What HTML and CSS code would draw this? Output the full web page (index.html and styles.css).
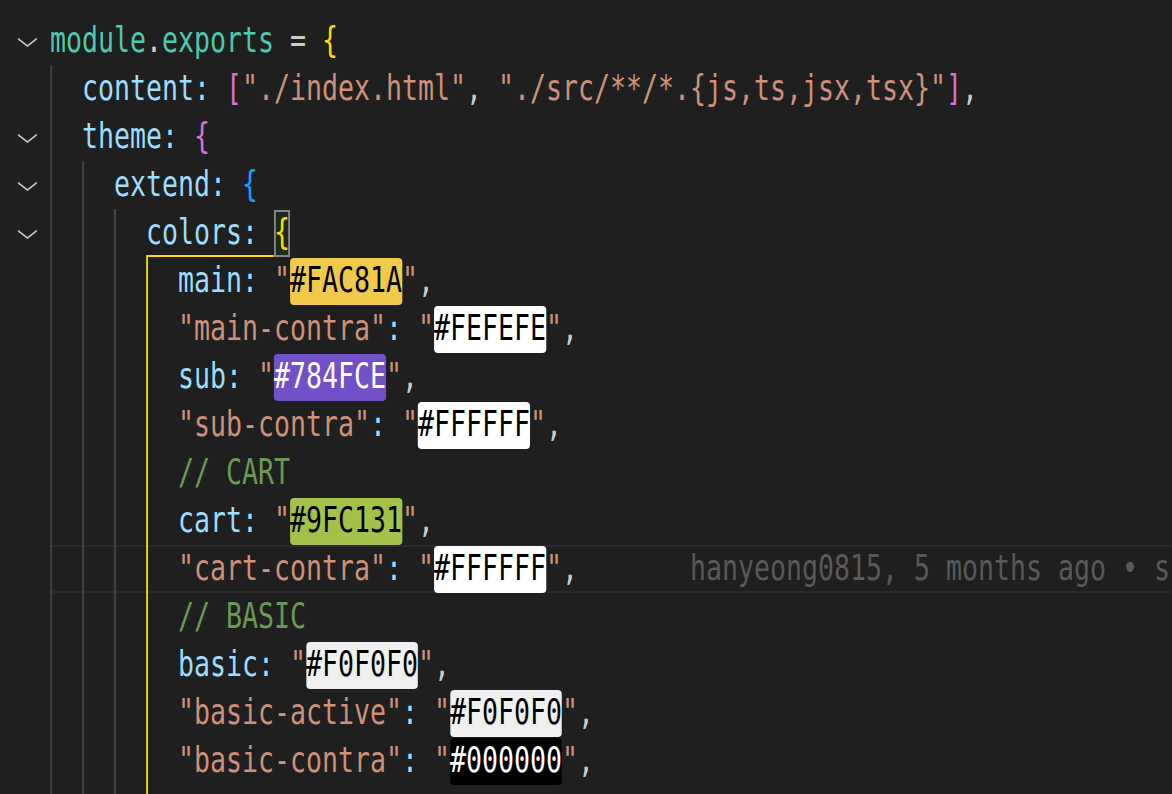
FILE: index.html
```html
<!DOCTYPE html>
<html lang="en">
<head>
<meta charset="utf-8">
<title>tailwind.config.js</title>
<link rel="stylesheet" href="styles.css">
</head>
<body>
<div class="editor">
  <div class="line"><div class="gutter"><svg class="chev" viewBox="0 0 26 9" preserveAspectRatio="none"><polyline points="1,1 13,8 25,1"/></svg></div><div class="code"><span class="var">module</span><span class="op">.</span><span class="var">exports</span><span class="op"> = </span><span class="b1">{</span></div></div>
  <div class="line"><div class="gutter"></div><div class="code"><span class="ind"></span><span class="key">content:</span><span class="op"> </span><span class="b2">[</span><span class="str">"./index.html"</span><span class="op">, </span><span class="str">"./src/**/*.{js,ts,jsx,tsx}"</span><span class="b2">]</span><span class="op">,</span></div></div>
  <div class="line"><div class="gutter"><svg class="chev" viewBox="0 0 26 9" preserveAspectRatio="none"><polyline points="1,1 13,8 25,1"/></svg></div><div class="code"><span class="ind"></span><span class="key">theme:</span><span class="op"> </span><span class="b2">{</span></div></div>
  <div class="line"><div class="gutter"><svg class="chev" viewBox="0 0 26 9" preserveAspectRatio="none"><polyline points="1,1 13,8 25,1"/></svg></div><div class="code"><span class="ind"></span><span class="ind"></span><span class="key">extend:</span><span class="op"> </span><span class="b3">{</span></div></div>
  <div class="line"><div class="gutter"><svg class="chev" viewBox="0 0 26 9" preserveAspectRatio="none"><polyline points="1,1 13,8 25,1"/></svg></div><div class="code"><span class="ind"></span><span class="ind"></span><span class="ind"></span><span class="uline"><span class="key">colors:</span><span class="op"> </span></span><span class="match b1">{</span></div></div>
  <div class="line"><div class="gutter"></div><div class="code"><span class="ind"></span><span class="ind"></span><span class="ind"></span><span class="ind active"></span><span class="key">main:</span><span class="op"> </span><span class="str">"</span><span class="sw sw-yellow">#FAC81A</span><span class="str">"</span><span class="op">,</span></div></div>
  <div class="line"><div class="gutter"></div><div class="code"><span class="ind"></span><span class="ind"></span><span class="ind"></span><span class="ind active"></span><span class="str">"main-contra"</span><span class="colon">:</span><span class="op"> </span><span class="str">"</span><span class="sw sw-white">#FEFEFE</span><span class="str">"</span><span class="op">,</span></div></div>
  <div class="line"><div class="gutter"></div><div class="code"><span class="ind"></span><span class="ind"></span><span class="ind"></span><span class="ind active"></span><span class="key">sub:</span><span class="op"> </span><span class="str">"</span><span class="sw sw-purple">#784FCE</span><span class="str">"</span><span class="op">,</span></div></div>
  <div class="line"><div class="gutter"></div><div class="code"><span class="ind"></span><span class="ind"></span><span class="ind"></span><span class="ind active"></span><span class="str">"sub-contra"</span><span class="colon">:</span><span class="op"> </span><span class="str">"</span><span class="sw sw-white">#FFFFFF</span><span class="str">"</span><span class="op">,</span></div></div>
  <div class="line"><div class="gutter"></div><div class="code"><span class="ind"></span><span class="ind"></span><span class="ind"></span><span class="ind active"></span><span class="cmt">// CART</span></div></div>
  <div class="line"><div class="gutter"></div><div class="code"><span class="ind"></span><span class="ind"></span><span class="ind"></span><span class="ind active"></span><span class="key">cart:</span><span class="op"> </span><span class="str">"</span><span class="sw sw-green">#9FC131</span><span class="str">"</span><span class="op">,</span></div></div>
  <div class="line current"><div class="gutter"></div><div class="code"><span class="ind"></span><span class="ind"></span><span class="ind"></span><span class="ind active"></span><span class="str">"cart-contra"</span><span class="colon">:</span><span class="op"> </span><span class="str">"</span><span class="sw sw-white">#FFFFFF</span><span class="str">"</span><span class="op">,</span><span class="blame">hanyeong0815, 5 months ago • s</span></div></div>
  <div class="line"><div class="gutter"></div><div class="code"><span class="ind"></span><span class="ind"></span><span class="ind"></span><span class="ind active"></span><span class="cmt">// BASIC</span></div></div>
  <div class="line"><div class="gutter"></div><div class="code"><span class="ind"></span><span class="ind"></span><span class="ind"></span><span class="ind active"></span><span class="key">basic:</span><span class="op"> </span><span class="str">"</span><span class="sw sw-light">#F0F0F0</span><span class="str">"</span><span class="op">,</span></div></div>
  <div class="line"><div class="gutter"></div><div class="code"><span class="ind"></span><span class="ind"></span><span class="ind"></span><span class="ind active"></span><span class="str">"basic-active"</span><span class="colon">:</span><span class="op"> </span><span class="str">"</span><span class="sw sw-light">#F0F0F0</span><span class="str">"</span><span class="op">,</span></div></div>
  <div class="line"><div class="gutter"></div><div class="code"><span class="ind"></span><span class="ind"></span><span class="ind"></span><span class="ind active"></span><span class="str">"basic-contra"</span><span class="colon">:</span><span class="op"> </span><span class="str">"</span><span class="sw sw-black">#000000</span><span class="str">"</span><span class="op">,</span></div></div>
  <div class="line"><div class="gutter"></div><div class="code"><span class="ind"></span><span class="ind"></span><span class="ind"></span><span class="ind active"></span></div></div>
</div>
</body>
</html>
```
FILE: styles.css
```css
html, body {
  margin: 0;
  height: 100%;
  background: #1f1f1f;
  overflow: hidden;
}

/* Editor is laid out at a wider scale and narrowed to reproduce the tall, condensed coding font */
.editor {
  width: 1587px;
  height: 777px;
  overflow: hidden;
  padding-top: 17px;
  transform: scaleX(0.7382);
  transform-origin: 0 0;
  font-family: "DejaVu Sans Mono", monospace;
  font-size: 36px;
  color: #cccccc;
}

.line {
  display: flex;
  height: 48px;
}

.gutter {
  flex: none;
  width: 67.73px;
  box-sizing: border-box;
  padding-left: 24.4px;
  padding-top: 3px;
  display: flex;
  align-items: center;
}

.chev {
  width: 26.3px;
  height: 9px;
  fill: none;
  stroke: #c5c5c5;
  stroke-width: 2;
  stroke-linecap: round;
  stroke-linejoin: round;
  overflow: visible;
}

.code {
  flex: 1;
  height: 48px;
  line-height: 46px;
  white-space: pre;
}

.current .code {
  box-shadow: inset 0 2px 0 #2a2a2a, inset 0 -2px 0 #2a2a2a;
}

.ind {
  display: inline-block;
  vertical-align: top;
  width: 2ch;
  height: 48px;
  background: linear-gradient(to right, #404040 2.7px, transparent 2.7px);
}

.ind.active {
  background: linear-gradient(to right, #ffd700 2.7px, transparent 2.7px);
}

.uline {
  display: inline-block;
  vertical-align: top;
  height: 48px;
  box-shadow: inset 0 -2px 0 #ffd700;
}

.match {
  display: inline-block;
  vertical-align: top;
  width: 1ch;
  height: 47px;
  margin-top: 1px;
  line-height: 44px;
  background: #1c2a1c;
  box-shadow: inset 2.7px 0 0 #858585, inset -2.7px 0 0 #858585, inset 0 2px 0 #858585, inset 0 -2px 0 #858585;
}

.var { color: #4ec9b0; }
.op { color: #cccccc; }
.key { color: #9cdcfe; }
.colon { color: #9cdcfe; }
.str { color: #ce9178; }
.cmt { color: #6a9955; }
.b1 { color: #ffd700; }
.b2 { color: #da70d6; }
.b3 { color: #179fff; }

.sw {
  display: inline-block;
  vertical-align: top;
  height: 47px;
  margin-top: 1px;
  line-height: 44px;
  border-radius: 5.4px / 4px;
  color: #000000;
}

.sw-yellow { background: #f1c94b; }
.sw-white { background: #ffffff; }
.sw-purple { background: #7150c8; color: #ffffff; }
.sw-green { background: #a4c14a; }
.sw-light { background: #efefef; }
.sw-black { background: #000000; color: #ffffff; }

.blame {
  margin-left: 7ch;
  color: #595959;
}
```
